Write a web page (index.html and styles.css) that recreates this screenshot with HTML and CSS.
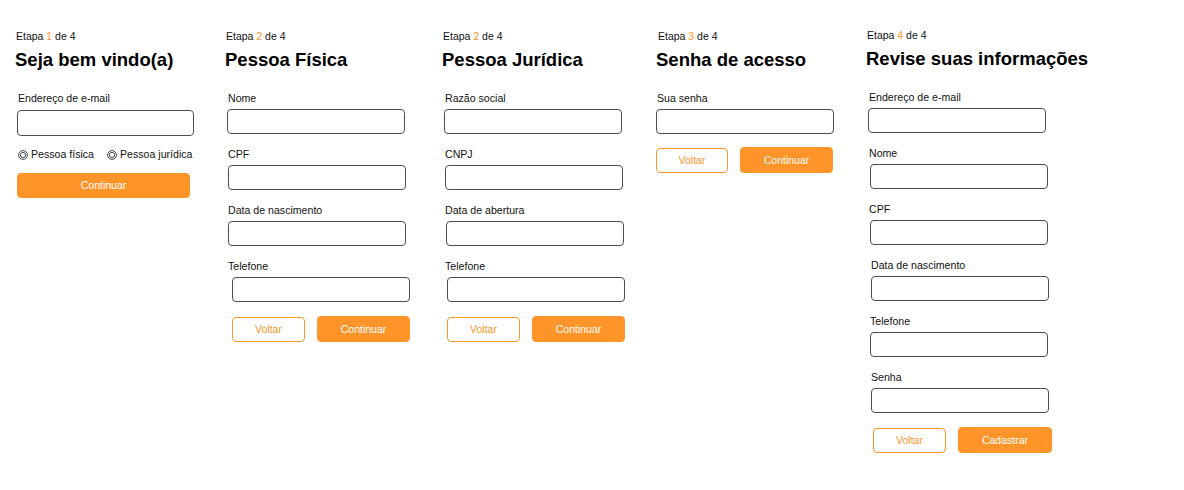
FILE: index.html
```html
<!DOCTYPE html>
<html lang="pt-BR">
<head>
<meta charset="utf-8">
<title>Cadastro</title>
<link rel="stylesheet" href="styles.css">
</head>
<body>
<main class="steps">
  <section class="step col-1">
    <p class="step-count">Etapa <span class="accent">1</span> de 4</p>
    <h1 class="step-title">Seja bem vindo(a)</h1>
    <div class="form">
      <div class="field field-first">
        <label class="label">Endereço de e-mail</label>
        <div class="input"></div>
      </div>
      <div class="radios">
        <span class="radio"><svg class="radio-icon" viewBox="0 0 10 10" width="10" height="10"><circle cx="5" cy="5" r="4.4" fill="none" stroke="#333" stroke-width="0.9"/><circle cx="5" cy="5" r="2.6" fill="none" stroke="#333" stroke-width="0.9"/></svg>Pessoa física</span>
        <span class="radio"><svg class="radio-icon" viewBox="0 0 10 10" width="10" height="10"><circle cx="5" cy="5" r="4.4" fill="none" stroke="#333" stroke-width="0.9"/><circle cx="5" cy="5" r="2.6" fill="none" stroke="#333" stroke-width="0.9"/></svg>Pessoa jurídica</span>
      </div>
      <button class="btn btn-primary btn-wide">Continuar</button>
    </div>
  </section>

  <section class="step col-2">
    <p class="step-count">Etapa <span class="accent">2</span> de 4</p>
    <h1 class="step-title">Pessoa Física</h1>
    <div class="form">
      <div class="field"><label class="label">Nome</label><div class="input"></div></div>
      <div class="field"><label class="label">CPF</label><div class="input shift-1"></div></div>
      <div class="field"><label class="label">Data de nascimento</label><div class="input shift-1"></div></div>
      <div class="field"><label class="label">Telefone</label><div class="input shift-5"></div></div>
      <div class="actions shift-5">
        <button class="btn btn-outline">Voltar</button>
        <button class="btn btn-primary">Continuar</button>
      </div>
    </div>
  </section>

  <section class="step col-3">
    <p class="step-count">Etapa <span class="accent">2</span> de 4</p>
    <h1 class="step-title">Pessoa Jurídica</h1>
    <div class="form">
      <div class="field"><label class="label">Razão social</label><div class="input"></div></div>
      <div class="field"><label class="label">CNPJ</label><div class="input shift-1"></div></div>
      <div class="field"><label class="label">Data de abertura</label><div class="input shift-2"></div></div>
      <div class="field"><label class="label">Telefone</label><div class="input shift-3"></div></div>
      <div class="actions shift-3">
        <button class="btn btn-outline">Voltar</button>
        <button class="btn btn-primary">Continuar</button>
      </div>
    </div>
  </section>

  <section class="step col-4">
    <p class="step-count">Etapa <span class="accent">3</span> de 4</p>
    <h1 class="step-title">Senha de acesso</h1>
    <div class="form">
      <div class="field"><label class="label">Sua senha</label><div class="input"></div></div>
      <div class="actions">
        <button class="btn btn-outline btn-narrow">Voltar</button>
        <button class="btn btn-primary">Continuar</button>
      </div>
    </div>
  </section>

  <section class="step col-5">
    <p class="step-count">Etapa <span class="accent">4</span> de 4</p>
    <h1 class="step-title">Revise suas informações</h1>
    <div class="form">
      <div class="field"><label class="label">Endereço de e-mail</label><div class="input"></div></div>
      <div class="field"><label class="label">Nome</label><div class="input shift-2"></div></div>
      <div class="field"><label class="label">CPF</label><div class="input shift-2"></div></div>
      <div class="field"><label class="label shift-2">Data de nascimento</label><div class="input shift-3"></div></div>
      <div class="field"><label class="label shift-1">Telefone</label><div class="input shift-2"></div></div>
      <div class="field"><label class="label shift-2">Senha</label><div class="input shift-3"></div></div>
      <div class="actions shift-5">
        <button class="btn btn-outline">Voltar</button>
        <button class="btn btn-primary btn-big">Cadastrar</button>
      </div>
    </div>
  </section>
</main>
</body>
</html>
```

FILE: styles.css
```css
* { box-sizing: border-box; }

html, body {
  margin: 0;
  padding: 0;
  background: #ffffff;
}

body {
  font-family: "Liberation Sans", Arial, sans-serif;
  color: #000000;
}

.steps {
  display: flex;
  align-items: flex-start;
  padding: 30px 0 0 15px;
}

.step { flex: none; }
.col-1 { width: 210px; }
.col-2 { width: 217px; }
.col-3 { width: 214px; }
.col-4 { width: 210px; }
.col-5 { width: 260px; }

.step-count {
  margin: 0 0 6px 1px;
  font-size: 10.5px;
  line-height: 13px;
  color: #111;
}

.col-4 .step-count { margin-left: 2px; }
.col-5 .step-count { margin-top: -1px; margin-bottom: 6px; }

.accent { color: #ff9429; }

.step-title {
  margin: 0;
  font-size: 18.5px;
  line-height: 22px;
  font-weight: 700;
  color: #000;
}

.form {
  padding-top: 21px;
  padding-left: 2px;
}

.col-4 .form { padding-left: 0; }

.field { margin-bottom: 14px; }

.label {
  display: block;
  font-size: 10.6px;
  line-height: 13px;
  margin: 0 0 4px 1px;
  color: #111;
}

.input {
  width: 178px;
  height: 25px;
  border: 1px solid #4d4d4d;
  border-radius: 4px;
  background: #fff;
}

.col-1 .field-first { margin-bottom: 12px; }
.col-1 .input { width: 177px; margin-top: 5px; height: 26px; }

.col-4 .field { margin-bottom: 13px; }

.shift-1 { margin-left: 1px; }
.shift-2 { margin-left: 2px; }
.shift-3 { margin-left: 3px; }
.shift-5 { margin-left: 5px; }
.label.shift-1 { margin-left: 2px; }
.label.shift-2 { margin-left: 3px; }

.radios {
  display: flex;
  gap: 13px;
  font-size: 10.6px;
  line-height: 13px;
  color: #111;
  margin-bottom: 12px;
  padding-left: 1px;
}

.radio {
  display: inline-flex;
  align-items: center;
  gap: 3px;
}

.radio-icon { display: block; flex: none; }

.actions {
  display: flex;
  align-items: center;
  gap: 12px;
}

.btn {
  font-family: "Liberation Sans", Arial, sans-serif;
  font-size: 10.5px;
  line-height: 1;
  border-radius: 4px;
  padding: 0;
  margin: 0;
  cursor: pointer;
}

.btn-primary {
  width: 93px;
  height: 26px;
  background: #ff9429;
  border: 1px solid #ff9429;
  color: #ffffff;
}

.btn-outline {
  width: 73px;
  height: 25px;
  background: #ffffff;
  border: 1px solid #ff9429;
  color: #ff9429;
}

.btn-narrow { width: 72px; }
.btn-big { width: 94px; }

.btn-wide {
  width: 173px;
  height: 25px;
}
```
